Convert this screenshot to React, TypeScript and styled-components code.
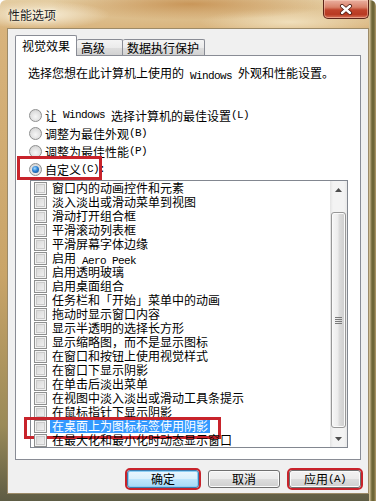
import styled, { createGlobalStyle } from "styled-components"

const GlobalStyle = createGlobalStyle`
  html, body { margin: 0; padding: 0; }
  body {
    width: 376px;
    height: 501px;
    overflow: hidden;
    font-family: "Noto Sans CJK SC", "Liberation Sans", sans-serif;
    font-size: 12px;
    color: #000;
  }
`

const Frame = styled.div`
  width: 376px;
  height: 501px;
  box-sizing: border-box;
  padding: 0 7px 7px 7px;
  display: flex;
  flex-direction: column;
  border-radius: 6px 6px 0 0;
  background:
    linear-gradient(90deg, rgba(0,0,0,0) 369px, #e4d2a8 369px, #6e6638 372px, #6e6638 374px, #b8a070 376px),
    radial-gradient(ellipse 70px 14px at 40px 15px, rgba(250,242,222,0.95), rgba(250,242,222,0)),
    radial-gradient(ellipse 140px 16px at 190px 4px, rgba(184,116,44,0.6), rgba(184,116,44,0)),
    radial-gradient(ellipse 90px 14px at 290px 22px, rgba(245,232,200,0.8), rgba(245,232,200,0)),
    linear-gradient(180deg, #e4cda2 0, #d8b37c 30px, #c9a468 55%, #9a8a58 85%, #5e5c44 100%);
`

const TitleBar = styled.div`
  height: 28px;
  flex: none;
  display: flex;
  align-items: flex-start;
  justify-content: space-between;
`

const Title = styled.div`
  padding: 8px 0 0 1px;
  line-height: 14px;
  color: #1c1c1c;
  text-shadow: 0 0 5px #fff6e4, 0 0 2px #fffaf0;
`

const CloseButton = styled.div`
  width: 46px;
  height: 19px;
  box-sizing: border-box;
  border: 1px solid #5c2418;
  border-top: none;
  border-radius: 0 0 5px 5px;
  background: linear-gradient(180deg, #eab0a0 0, #d9826a 40%, #c0442c 55%, #b83a22 80%, #d8745a 100%);
  box-shadow: inset 0 0 0 1px rgba(255, 220, 200, 0.45);
  display: flex;
  align-items: center;
  justify-content: center;
`

const Client = styled.div`
  flex: 1;
  background: #f0f0f0;
  border: 1px solid #9c8a68;
  padding: 6px 7px 5px 7px;
  display: flex;
  flex-direction: column;
`

const TabStrip = styled.div`
  height: 20px;
  flex: none;
  display: flex;
  align-items: flex-end;
  position: relative;
  z-index: 1;
`

const Tab = styled.div<{ $active?: boolean; $w: number }>`
  width: ${p => p.$w}px;
  height: ${p => (p.$active ? 21 : 16)}px;
  margin-bottom: ${p => (p.$active ? -1 : 0)}px;
  box-sizing: border-box;
  border: 1px solid #898c95;
  border-bottom: none;
  border-left: ${p => (p.$active ? "1px solid #898c95" : "none")};
  border-radius: 2px 2px 0 0;
  background: ${p =>
    p.$active ? "#fff" : "linear-gradient(180deg, #f4f4f4 0, #ebebeb 50%, #dedede 51%, #d2d2d2 100%)"};
  display: flex;
  align-items: center;
  justify-content: ${p => (p.$active ? "center" : "flex-start")};
  padding-left: ${p => (p.$active ? 0 : 4)}px;
  line-height: 14px;
  white-space: nowrap;
`

const Panel = styled.div`
  flex: 1;
  background: #fff;
  border: 1px solid #898c95;
  padding: 10px 0 0 12px;
  display: flex;
  flex-direction: column;
`

const Desc = styled.div`
  line-height: 14px;
  white-space: nowrap;
`

const Latin = styled.span`
  font-family: "Liberation Mono", "DejaVu Sans Mono", monospace;
  font-size: 11px;
  letter-spacing: -0.6px;
  vertical-align: -1px;
  white-space: pre;
`

const RadioGroup = styled.div`
  margin-top: 23px;
  display: flex;
  flex-direction: column;
`

const RadioRow = styled.div`
  height: 18px;
  display: flex;
  align-items: center;
  position: relative;
  white-space: nowrap;
`

const Radio = styled.span<{ $on?: boolean }>`
  width: 13px;
  height: 13px;
  margin-left: 1px;
  margin-right: 3px;
  flex: none;
  box-sizing: border-box;
  border-radius: 50%;
  border: 1px solid #8e8f8f;
  background: radial-gradient(circle at 50% 60%, #f6f6f6 0, #e0e0e0 55%, #c8c8c8 100%);
  position: relative;
  &::after {
    content: "";
    display: ${p => (p.$on ? "block" : "none")};
    position: absolute;
    left: 2px;
    top: 2px;
    width: 7px;
    height: 7px;
    border-radius: 50%;
    background: radial-gradient(circle at 40% 35%, #a6dcff 0, #2c80d2 45%, #0d3f7c 100%);
  }
`

const Mark = styled.span<{ $l: number; $t: number; $w: number; $h: number }>`
  position: absolute;
  left: ${p => p.$l}px;
  top: ${p => p.$t}px;
  width: ${p => p.$w}px;
  height: ${p => p.$h}px;
  box-sizing: border-box;
  border: 3px solid #c8232b;
  pointer-events: none;
`

const ListBox = styled.div`
  margin: 2px 0 0 2px;
  width: 318px;
  height: 268px;
  box-sizing: border-box;
  border: 1px solid #828790;
  background: #fff;
  display: flex;
`

const ItemList = styled.div`
  flex: 1;
  display: flex;
  flex-direction: column;
`

const Row = styled.div`
  height: 14px;
  flex: none;
  display: flex;
  align-items: center;
  padding-left: 3px;
  position: relative;
  white-space: nowrap;
`

const Box = styled.span`
  width: 13px;
  height: 13px;
  flex: none;
  box-sizing: border-box;
  border: 1px solid #8e8f8f;
  background: linear-gradient(135deg, #d4d4d4 0, #f4f4f4 100%);
  box-shadow: inset 0 0 0 1px #f2f2f2, inset 0 0 0 2px #cacaca;
`

const Label = styled.span<{ $sel?: boolean }>`
  margin-left: 3px;
  padding: 0 2px;
  height: 14px;
  line-height: 14px;
  background: ${p => (p.$sel ? "#3399ff" : "transparent")};
  color: ${p => (p.$sel ? "#fff" : "#000")};
`

const ScrollBar = styled.div`
  width: 17px;
  flex: none;
  display: flex;
  flex-direction: column;
  background: linear-gradient(90deg, #e3e3e3 0, #f3f3f3 3px, #f3f3f3 14px, #e8e8e8 17px);
`

const ScrollButton = styled.div`
  height: 17px;
  flex: none;
  display: flex;
  align-items: center;
  justify-content: center;
`

const Track = styled.div`
  flex: 1;
  padding-top: 14px;
`

const Thumb = styled.div`
  height: 216px;
  margin: 0 1px;
  box-sizing: border-box;
  border: 1px solid #979797;
  border-radius: 3px;
  background: linear-gradient(90deg, #f7f7f7 0, #ececec 45%, #dcdcdc 55%, #cdcdcd 100%);
  box-shadow: inset 0 0 0 1px #fafafa;
  display: flex;
  align-items: center;
  justify-content: center;
`

const ButtonRow = styled.div`
  margin-top: 10px;
  height: 18px;
  flex: none;
  display: flex;
  justify-content: flex-end;
  gap: 9px;
`

const Button = styled.div<{ $primary?: boolean; $marked?: boolean }>`
  width: 72px;
  height: 18px;
  box-sizing: border-box;
  border: 1px solid ${p => (p.$primary ? "#3c7fb1" : "#707070")};
  border-radius: 3px;
  background: ${p =>
    p.$primary
      ? "linear-gradient(180deg, #eaf6fd 0, #d9f0fc 50%, #bee6fd 51%, #a7d9f5 100%)"
      : "linear-gradient(180deg, #f2f2f2 0, #ebebeb 50%, #dddddd 51%, #cfcfcf 100%)"};
  box-shadow: inset 0 0 0 1px ${p => (p.$primary ? "#8fd0f5" : "#fbfbfb")};
  outline: ${p => (p.$marked ? "2px solid #c8232b" : "none")};
  display: flex;
  align-items: center;
  justify-content: center;
  line-height: 14px;
`

const items = [
  "窗口内的动画控件和元素",
  "淡入淡出或滑动菜单到视图",
  "滑动打开组合框",
  "平滑滚动列表框",
  "平滑屏幕字体边缘",
  "启用 Aero Peek",
  "启用透明玻璃",
  "启用桌面组合",
  "任务栏和「开始」菜单中的动画",
  "拖动时显示窗口内容",
  "显示半透明的选择长方形",
  "显示缩略图，而不是显示图标",
  "在窗口和按钮上使用视觉样式",
  "在窗口下显示阴影",
  "在单击后淡出菜单",
  "在视图中淡入淡出或滑动工具条提示",
  "在鼠标指针下显示阴影",
  "在桌面上为图标标签使用阴影",
  "在最大化和最小化时动态显示窗口",
]

const renderText = (t: string) => {
  const m = t.match(/^(.*?) (Aero Peek)$/)
  if (m) return <>{m[1]}<Latin> {m[2]}</Latin></>
  return t
}

const App = () => {
  return (
    <>
      <GlobalStyle />
      <Frame>
        <TitleBar>
          <Title>性能选项</Title>
          <CloseButton>
            <svg width="14" height="11" viewBox="0 0 14 11">
              <path d="M3 2 L11 9 M11 2 L3 9" stroke="#4a1a10" strokeWidth="4" strokeLinecap="round" />
              <path d="M3 2 L11 9 M11 2 L3 9" stroke="#fff" strokeWidth="2.4" strokeLinecap="round" />
            </svg>
          </CloseButton>
        </TitleBar>
        <Client>
          <TabStrip>
            <Tab $active $w={62}>视觉效果</Tab>
            <Tab $w={46}>高级</Tab>
            <Tab $w={82}>数据执行保护</Tab>
          </TabStrip>
          <Panel>
            <Desc>选择您想在此计算机上使用的<Latin> Windows </Latin>外观和性能设置。</Desc>
            <RadioGroup>
              <RadioRow><Radio />让<Latin> Windows </Latin>选择计算机的最佳设置<Latin>(L)</Latin></RadioRow>
              <RadioRow><Radio />调整为最佳外观<Latin>(B)</Latin></RadioRow>
              <RadioRow><Radio />调整为最佳性能<Latin>(P)</Latin></RadioRow>
              <RadioRow>
                <Radio $on />自定义<Latin>(C):</Latin>
                <Mark $l={-11} $t={-4} $w={85} $h={24} />
              </RadioRow>
            </RadioGroup>
            <ListBox>
              <ItemList>
                {items.map((t, i) => (
                  <Row key={t}>
                    <Box />
                    <Label $sel={i === 17}>{renderText(t)}</Label>
                    {i === 17 && <Mark $l={-7} $t={-2} $w={197} $h={22} />}
                  </Row>
                ))}
              </ItemList>
              <ScrollBar>
                <ScrollButton>
                  <svg width="7" height="4" viewBox="0 0 7 4"><path d="M0 4 L3.5 0 L7 4 Z" fill="#4d4d4d" /></svg>
                </ScrollButton>
                <Track>
                  <Thumb>
                    <svg width="7" height="7" viewBox="0 0 7 7">
                      <path d="M0 0.5 H7 M0 2.5 H7 M0 4.5 H7 M0 6.5 H7" stroke="#7a7a7a" strokeWidth="1" />
                    </svg>
                  </Thumb>
                </Track>
                <ScrollButton>
                  <svg width="7" height="4" viewBox="0 0 7 4"><path d="M0 0 L3.5 4 L7 0 Z" fill="#4d4d4d" /></svg>
                </ScrollButton>
              </ScrollBar>
            </ListBox>
          </Panel>
          <ButtonRow>
            <Button $primary $marked>确定</Button>
            <Button>取消</Button>
            <Button $marked>应用<Latin>(A)</Latin></Button>
          </ButtonRow>
        </Client>
      </Frame>
    </>
  )
}

export default App
